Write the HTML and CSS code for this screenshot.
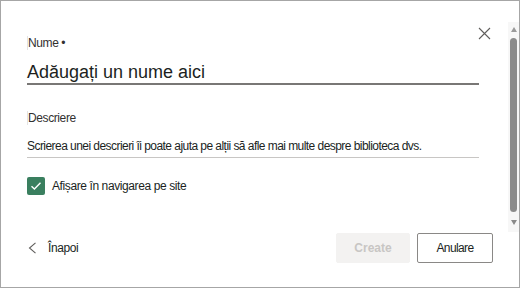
FILE: index.html
```html
<!DOCTYPE html>
<html lang="ro">
<head>
<meta charset="utf-8">
<title>Creare bibliotecă</title>
<link rel="stylesheet" href="styles.css">
</head>
<body>
<div class="dialog">
  <div class="main">
    <button class="close" aria-label="Închidere">
      <svg width="13" height="13" viewBox="0 0 13 13"><path d="M1 1 L12 12 M12 1 L1 12" stroke="#605e5c" stroke-width="1.1" fill="none"/></svg>
    </button>
    <div class="field">
      <label class="label">Nume <span class="req">•</span></label>
      <div class="name-input">Adăugați un nume aici</div>
    </div>
    <div class="field desc-field">
      <label class="label">Descriere</label>
      <div class="desc-input">Scrierea unei descrieri îi poate ajuta pe alții să afle mai multe despre biblioteca dvs.</div>
    </div>
    <div class="check-row">
      <span class="checkbox">
        <svg width="12" height="10" viewBox="0 0 12 10"><path d="M1.5 5.2 L4.4 8 L10.5 1.8" stroke="#fff" stroke-width="1.4" fill="none"/></svg>
      </span>
      <span class="check-text">Afișare în navigarea pe site</span>
    </div>
    <div class="footer">
      <button class="back">
        <svg width="9" height="12" viewBox="0 0 9 12"><path d="M7.5 0.8 L1.5 6 L7.5 11.2" stroke="#605e5c" stroke-width="1.1" fill="none"/></svg>
        <span class="back-text">Înapoi</span>
      </button>
      <div class="actions">
        <button class="btn create">Create</button>
        <button class="btn cancel">Anulare</button>
      </div>
    </div>
  </div>
  <div class="scrollbar">
    <span class="arrow up"></span>
    <span class="thumb"></span>
    <span class="arrow down"></span>
  </div>
</div>
</body>
</html>
```
FILE: styles.css
```css
* { box-sizing: border-box; }
html, body { margin: 0; padding: 0; background: #fff; }
body { font-family: "Liberation Sans", Arial, sans-serif; color: #201f1e; }

.dialog {
  position: relative;
  width: 520px;
  height: 288px;
  border: 1px solid #a6a6a6;
  display: flex;
  background: #fff;
}

.main {
  flex: 1;
  padding: 35px 15px 0 26px;
  display: flex;
  flex-direction: column;
}

.close {
  position: absolute;
  left: 477px;
  top: 26px;
  width: 13px;
  height: 13px;
  padding: 0;
  border: 0;
  background: none;
  display: block;
}
.close svg { display: block; }

.field { margin-right: 14px; }

.label {
  display: block;
  width: fit-content;
  font-size: 12px;
  line-height: 14px;
  height: 14px;
  letter-spacing: -0.4px;
  color: #323130;
  border-left: 1px solid #e3e3e3;
}
.req { letter-spacing: 0; }

.name-input {
  margin-top: 11px;
  font-size: 18px;
  line-height: 22px;
  color: #201f1e;
  border-bottom: 2px solid #797775;
}

.desc-field { margin-top: 26px; }

.desc-input {
  margin-top: 14px;
  font-size: 12px;
  line-height: 14px;
  letter-spacing: -0.55px;
  padding-bottom: 4px;
  border-bottom: 1px solid #c8c6c4;
  white-space: nowrap;
}

.check-row {
  margin-top: 19px;
  display: flex;
  align-items: center;
  height: 18px;
}
.checkbox {
  width: 18px;
  height: 18px;
  border-radius: 2px;
  background: #3a7f5f;
  display: flex;
  align-items: center;
  justify-content: center;
}
.checkbox svg { display: block; }
.check-text {
  margin-left: 7px;
  font-size: 12px;
  line-height: 14px;
  letter-spacing: -0.4px;
}

.footer {
  margin-top: 38px;
  display: flex;
  align-items: center;
  justify-content: space-between;
}
.back {
  display: flex;
  align-items: center;
  gap: 11px;
  padding: 0 0 0 1px;
  border: 0;
  background: none;
  font-family: inherit;
  font-size: 12px;
  color: #201f1e;
}
.back svg { display: block; }
.back-text { letter-spacing: -0.4px; line-height: 14px; }

.actions { display: flex; gap: 7px; }
.btn {
  height: 30px;
  border-radius: 2px;
  font-family: inherit;
  font-size: 12px;
  padding: 0;
}
.create {
  width: 74px;
  border: 1px solid #f3f2f1;
  background: #f3f2f1;
  color: #c8c6c4;
  font-weight: bold;
}
.cancel {
  width: 76px;
  border: 1px solid #8a8886;
  background: #fff;
  color: #201f1e;
  letter-spacing: -0.6px;
}

.scrollbar {
  width: 11px;
  margin-top: 21px;
  height: 210px;
  background: #f7f7f7;
  display: flex;
  flex-direction: column;
  align-items: center;
  padding-top: 5px;
}
.arrow {
  width: 0;
  height: 0;
  border-left: 3.5px solid transparent;
  border-right: 3.5px solid transparent;
}
.arrow.up { border-bottom: 5px solid #9a9a9a; }
.arrow.down { border-top: 5px solid #8a8a8a; margin-top: 8px; }
.thumb {
  width: 7px;
  height: 174px;
  margin-top: 6px;
  border-radius: 3.5px;
  background: #8b8b8b;
}
```
